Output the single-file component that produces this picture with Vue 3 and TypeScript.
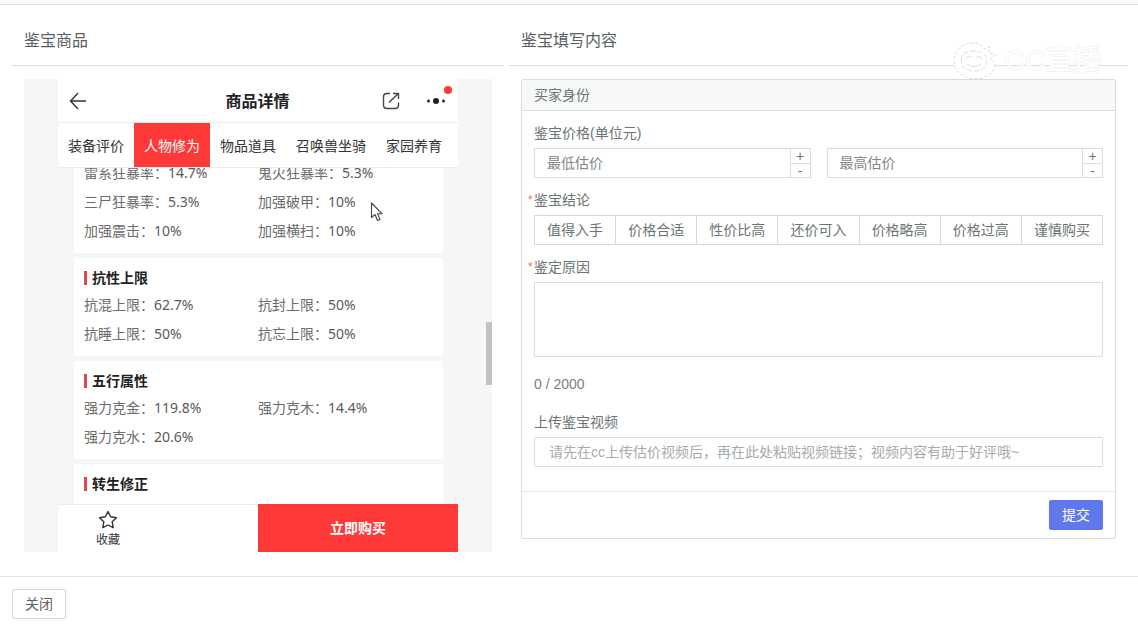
<script setup lang="ts">
import { ref } from 'vue'

interface Attr { name: string; value: string }
interface Group { title?: string; rows: Attr[] }

const tabs: string[] = ['装备评价', '人物修为', '物品道具', '召唤兽坐骑', '家园养育']
const activeTab = ref(1)

const groups: Group[] = [
  {
    rows: [
      { name: '雷系狂暴率', value: '14.7%' },
      { name: '鬼火狂暴率', value: '5.3%' },
      { name: '三尸狂暴率', value: '5.3%' },
      { name: '加强破甲', value: '10%' },
      { name: '加强震击', value: '10%' },
      { name: '加强横扫', value: '10%' },
    ],
  },
  {
    title: '抗性上限',
    rows: [
      { name: '抗混上限', value: '62.7%' },
      { name: '抗封上限', value: '50%' },
      { name: '抗睡上限', value: '50%' },
      { name: '抗忘上限', value: '50%' },
    ],
  },
  {
    title: '五行属性',
    rows: [
      { name: '强力克金', value: '119.8%' },
      { name: '强力克木', value: '14.4%' },
      { name: '强力克水', value: '20.6%' },
    ],
  },
  { title: '转生修正', rows: [] },
]

const verdicts: string[] = ['值得入手', '价格合适', '性价比高', '还价可入', '价格略高', '价格过高', '谨慎购买']
const verdict = ref('')
const low = ref('')
const high = ref('')
const reason = ref('')
const video = ref('')

function step(value: string, by: number): string {
  return String(Math.max(0, (Number(value) || 0) + by))
}
</script>

<template>
  <div class="page">
    <div class="strip"></div>
    <main class="columns">
      <section class="panel">
        <h2 class="panel-title">鉴宝商品</h2>
        <div class="panel-body">
          <div class="viewer">
            <div class="phone">
              <header class="phone-head">
                <button class="icon-btn" type="button" aria-label="返回">
                  <svg width="18" height="18" viewBox="0 0 18 18" fill="none" stroke="#333" stroke-width="1.4">
                    <path d="M17 9H1.5M9 1L1.5 9L9 17" />
                  </svg>
                </button>
                <h3>商品详情</h3>
                <div class="head-actions">
                  <button class="icon-btn" type="button" aria-label="分享">
                    <svg width="18" height="18" viewBox="0 0 18 18" fill="none" stroke="#444" stroke-width="1.4">
                      <path d="M8 1.5H5Q1.5 1.5 1.5 5V13Q1.5 16.5 5 16.5H13Q16.5 16.5 16.5 13V10.5M7 10.5L16 1.8M11 1.5H16.5V7" />
                    </svg>
                  </button>
                  <button class="icon-btn" type="button" aria-label="更多">
                    <svg width="20" height="8" viewBox="0 0 20 8" fill="#222">
                      <circle cx="2.5" cy="4" r="1.5" /><circle cx="10" cy="4" r="3" /><circle cx="17.5" cy="4" r="1.5" />
                    </svg>
                    <span class="dot"></span>
                  </button>
                </div>
              </header>
              <nav class="tabs">
                <button
                  v-for="(tab, i) in tabs" :key="tab" type="button"
                  class="tab" :class="{ active: i === activeTab }" @click="activeTab = i"
                >{{ tab }}</button>
              </nav>
              <div class="list">
                <div class="list-inner">
                  <section v-for="(group, i) in groups" :key="i" class="group">
                    <h4 v-if="group.title">{{ group.title }}</h4>
                    <dl>
                      <div v-for="row in group.rows" :key="row.name" class="attr">
                        <dt>{{ row.name }}：</dt><dd>{{ row.value }}</dd>
                      </div>
                    </dl>
                  </section>
                </div>
              </div>
              <footer class="phone-foot">
                <button class="fav" type="button">
                  <svg width="20" height="20" viewBox="0 0 20 20" fill="none" stroke="#333" stroke-width="1.4" stroke-linejoin="round">
                    <path d="M10 1.5L12.6 6.8L18.5 7.7L14.2 11.8L15.2 17.7L10 15L4.8 17.7L5.8 11.8L1.5 7.7L7.4 6.8Z" />
                  </svg>
                  <span>收藏</span>
                </button>
                <button class="buy" type="button">立即购买</button>
              </footer>
            </div>
            <span class="thumb"></span>
            <svg class="cursor" width="14" height="20" viewBox="0 0 14 20" fill="#fff" stroke="#444" stroke-width="1.1" stroke-linejoin="round">
              <path d="M1.5 1V15.5L5 12.5L7.5 18.5L10 17.4L7.5 11.8H12.2Z" />
            </svg>
          </div>
        </div>
      </section>

      <section class="panel">
        <h2 class="panel-title">鉴宝填写内容</h2>
        <div class="watermark" aria-hidden="true">
          <svg width="46" height="40" viewBox="0 0 46 40" fill="#fff" stroke="#dcdcdc" stroke-width="1">
            <path d="M21 2C9 2 1 10 1 20S9 38 22 38C34 38 42 31 42 23L37 18L43 14L36 12L37 6L31 8C28 4 25 2 21 2Z" stroke-dasharray="3 2" />
            <path d="M8 19C8 12 15 10 21 10C29 10 34 14 34 20C34 27 28 30 21 30C13 30 8 26 8 19Z" stroke-dasharray="5 2" />
            <path d="M13 18Q15 13 19 17M23 17Q27 13 29 18M14 23Q21 28 28 23" />
          </svg>
          <span>CC直播</span>
        </div>
        <div class="panel-body">
          <form class="card" @submit.prevent>
            <div class="card-head">买家身份</div>
            <div class="card-body">
              <div class="field">
                <label class="label" for="low">鉴宝价格(单位元)</label>
                <div class="prices">
                  <div class="number">
                    <input id="low" v-model="low" inputmode="numeric" placeholder="最低估价" />
                    <div class="steps">
                      <button type="button" @click="low = step(low, 1)">+</button>
                      <button type="button" @click="low = step(low, -1)">-</button>
                    </div>
                  </div>
                  <div class="number">
                    <input id="high" v-model="high" inputmode="numeric" placeholder="最高估价" aria-label="最高估价" />
                    <div class="steps">
                      <button type="button" @click="high = step(high, 1)">+</button>
                      <button type="button" @click="high = step(high, -1)">-</button>
                    </div>
                  </div>
                </div>
              </div>
              <div class="field">
                <span id="verdict-label" class="label required">鉴宝结论</span>
                <div class="choices" role="radiogroup" aria-labelledby="verdict-label">
                  <label v-for="v in verdicts" :key="v" class="choice">
                    <input v-model="verdict" type="radio" name="verdict" :value="v" />
                    <span>{{ v }}</span>
                  </label>
                </div>
              </div>
              <div class="field">
                <label class="label required" for="reason">鉴定原因</label>
                <textarea id="reason" v-model="reason" class="box area" maxlength="2000"></textarea>
              </div>
              <p class="count">{{ reason.length }} / 2000</p>
              <div class="field">
                <label class="label" for="video">上传鉴宝视频</label>
                <input id="video" v-model="video" class="box link" placeholder="请先在cc上传估价视频后，再在此处粘贴视频链接；视频内容有助于好评哦~" />
              </div>
            </div>
            <div class="card-foot">
              <button class="submit" type="submit">提交</button>
            </div>
          </form>
        </div>
      </section>
    </main>
    <footer class="page-foot">
      <button class="close" type="button">关闭</button>
    </footer>
  </div>
</template>

<style>
body {
  margin: 0;
  background: #fff;
}
</style>

<style scoped>
.page, .page * {
  box-sizing: border-box;
}
.page {
  font-family: "Liberation Sans", "Noto Sans CJK SC", sans-serif;
  font-size: 14px;
  line-height: 22px;
  color: #6c7474;
}
button, input, textarea {
  font: inherit;
  color: inherit;
  margin: 0;
}
button {
  padding: 0;
  border: 0;
  background: none;
  cursor: pointer;
}
h2, h3, h4, p, dl, dd {
  margin: 0;
}
.strip {
  height: 5px;
  background: #fcfcfc;
  border-bottom: 1px solid #e2e2e2;
}
.columns {
  display: grid;
  grid-template-columns: 492fr 619fr;
  gap: 5px;
  padding: 0 10px 0 12px;
}
.panel {
  position: relative;
  min-width: 0;
}
.panel-title {
  padding: 25px 12px 13px;
  border-bottom: 1px solid #dcdcdc;
  font-size: 16px;
  font-weight: 400;
  line-height: 22px;
  color: #5a5f64;
}
.panel-body {
  padding: 13px 12px 24px;
}

/* Item preview */
.viewer {
  position: relative;
  background: #f6f6f6;
  font-family: "Noto Sans", "Noto Sans CJK SC", sans-serif;
}
.phone {
  width: 400px;
  max-width: 100%;
  margin: 0 auto;
}
.phone-head {
  display: grid;
  grid-template-columns: 1fr auto 1fr;
  align-items: center;
  height: 44px;
  padding: 0 12px 0 11px;
  background: #fff;
  border-bottom: 1px solid #ececec;
}
.phone-head h3 {
  font-size: 16px;
  font-weight: 700;
  color: #222;
}
.icon-btn {
  display: flex;
  justify-self: start;
  position: relative;
}
.head-actions {
  display: flex;
  align-items: center;
  justify-content: flex-end;
  gap: 26px;
}
.dot {
  position: absolute;
  top: -11px;
  right: -6px;
  width: 8px;
  height: 8px;
  border-radius: 50%;
  background: #fd3a3a;
}
.tabs {
  display: flex;
  height: 45px;
  background: #fff;
  border-bottom: 1px solid #ececec;
}
.tab {
  padding: 2px 10px 0;
  color: #333;
  white-space: nowrap;
}
.tab.active {
  background: #ff3938;
  color: #fff;
}
.list {
  height: 336px;
  overflow: hidden;
  padding: 0 15px 0 16px;
}
.list-inner {
  display: flex;
  flex-direction: column;
  gap: 5px;
  margin-top: -17px;
}
.group {
  padding: 7px 10px 8px;
  background: #fff;
}
.group:last-child {
  padding-bottom: 16px;
}
.group h4 {
  display: flex;
  align-items: center;
  gap: 5px;
  height: 25px;
  font-size: 14px;
  font-weight: 700;
  color: #222;
}
.group h4::before {
  content: "";
  width: 3px;
  height: 14px;
  background: #e0474c;
}
.group dl {
  display: grid;
  grid-template-columns: 174px 1fr;
}
.attr {
  display: flex;
  line-height: 29px;
  color: #6c6c6c;
}
.attr dd {
  color: #5a5a5a;
}
.phone-foot {
  display: grid;
  grid-template-columns: 1fr 1fr;
  height: 48px;
  background: #fff;
}
.fav {
  display: flex;
  flex-direction: column;
  align-items: center;
  justify-content: center;
  gap: 1px;
  padding: 2px 100px 0 0;
  border-top: 1px solid #ececec;
  font-size: 12px;
  line-height: 18px;
  color: #333;
}
.buy {
  background: #ff3938;
  color: #fff;
  font-weight: 700;
}
.thumb {
  position: absolute;
  right: 0;
  top: 243px;
  width: 6px;
  height: 63px;
  background: #c2c2c2;
}
.cursor {
  position: absolute;
  left: 346px;
  top: 123px;
}

/* Appraisal form */
.watermark {
  position: absolute;
  top: 36px;
  right: 27px;
  z-index: 1;
  display: flex;
  align-items: center;
  gap: 6px;
  pointer-events: none;
}
.watermark span {
  font-size: 28px;
  line-height: 40px;
  color: #fff;
  -webkit-text-stroke: 1px #ececec;
  paint-order: stroke fill;
}
.card {
  border: 1px solid #dadddd;
  border-radius: 2px;
}
.card-head {
  padding: 4px 12px;
  background: #f7f9f9;
  border-bottom: 1px solid #dadddd;
}
.card-body {
  display: flex;
  flex-direction: column;
  gap: 11px;
  padding: 11px 12px 24px;
}
.field {
  display: flex;
  flex-direction: column;
  gap: 4px;
}
.label {
  position: relative;
  align-self: flex-start;
}
.required::before {
  content: "*";
  position: absolute;
  left: -6px;
  font-size: 12px;
  color: #f56c6c;
}
.prices {
  display: grid;
  grid-template-columns: 1fr 1fr;
  gap: 16px;
}
.number {
  display: flex;
  height: 30px;
  border: 1px solid #dadddd;
}
.number input {
  flex: 1;
  min-width: 0;
  padding: 0 12px;
  border: 0;
  outline: 0;
  background: none;
}
.number input::placeholder {
  color: #858585;
}
.steps {
  display: grid;
  grid-template-rows: 1fr 1fr;
  width: 20px;
  border-left: 1px solid #dadddd;
}
.steps button {
  line-height: 12px;
}
.steps button + button {
  border-top: 1px solid #dadddd;
}
.choices {
  display: flex;
  height: 30px;
  border: 1px solid #d4dada;
}
.choice {
  flex: 1;
  position: relative;
  line-height: 28px;
  text-align: center;
  cursor: pointer;
}
.choice + .choice {
  border-left: 1px solid #d4dada;
}
.choice input {
  position: absolute;
  opacity: 0;
}
.choice input:checked + span {
  color: #5b75ea;
}
.box {
  display: block;
  width: 100%;
  border: 1px solid #dadddd;
  border-radius: 1px;
  outline: 0;
  background: #fff;
}
.area {
  height: 75px;
  padding: 4px 12px;
  resize: none;
}
.count {
  padding: 5px 0;
  color: #808080;
}
.link {
  height: 30px;
  padding: 0 14px;
}
.link::placeholder {
  color: #a6abab;
}
.card-foot {
  display: flex;
  justify-content: flex-end;
  padding: 8px 12px;
  border-top: 1px solid #e6e8e8;
}
.submit {
  height: 30px;
  padding: 0 13px;
  border-radius: 2px;
  background: #6078ea;
  color: #fff;
}
.page-foot {
  padding: 12px;
  border-top: 1px solid #e2e2e2;
}
.close {
  height: 30px;
  padding: 0 12px;
  border: 1px solid #d6d6d6;
  border-radius: 2px;
  color: #606060;
}
</style>
